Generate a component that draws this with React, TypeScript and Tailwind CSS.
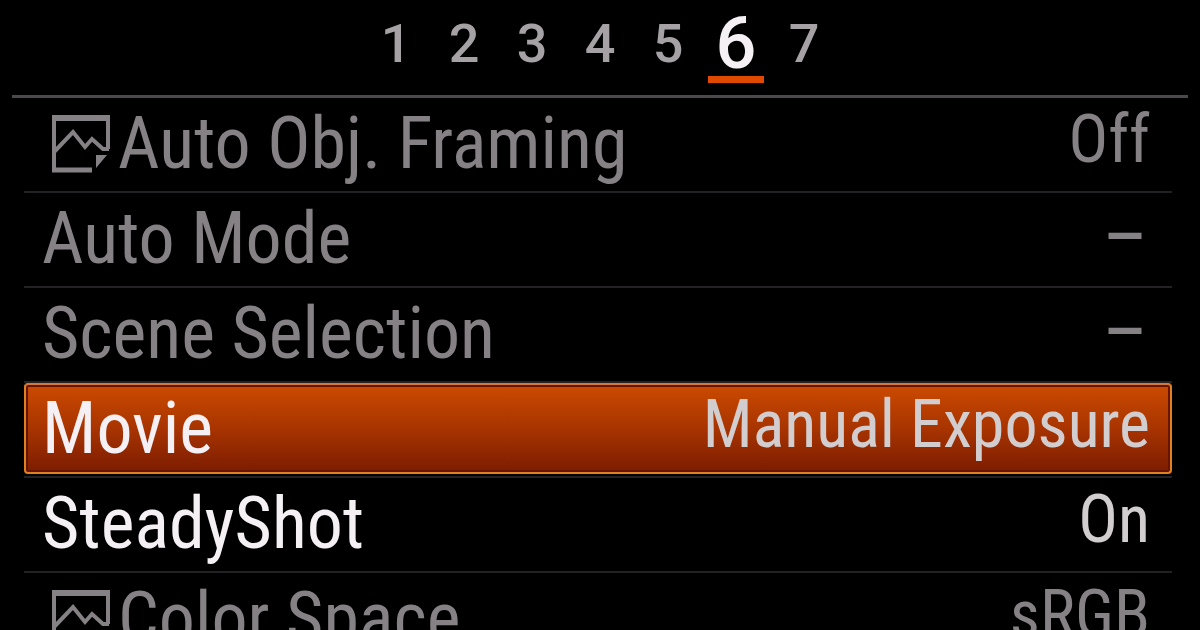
import { useState } from 'react';
import clsx from 'clsx';

type MenuItem = {
  label: string;
  value: string;
  still?: boolean;
  disabled?: boolean;
};

const PAGES = [1, 2, 3, 4, 5, 6, 7];

const ITEMS: MenuItem[] = [
  { label: 'Auto Obj. Framing', value: 'Off', still: true, disabled: true },
  { label: 'Auto Mode', value: '–', disabled: true },
  { label: 'Scene Selection', value: '–', disabled: true },
  { label: 'Movie', value: 'Manual Exposure' },
  { label: 'SteadyShot', value: 'On' },
  { label: 'Color Space', value: 'sRGB', still: true, disabled: true },
];

// still image marker: framed mountains with a folded corner
const StillIcon = () => (
  <svg
    viewBox="0 0 60 60"
    className="mr-2 ml-2 h-15 w-15 shrink-0"
    fill="none"
    stroke="currentColor"
    strokeWidth="4"
    aria-hidden="true"
  >
    <path d="M4 57V2M58 2V35" />
    <path d="M2 4H60" strokeWidth="6" />
    <path d="M2 56H42" strokeWidth="5" />
    <path d="M4 38L23 18L35 33L42 25L53 35H59" />
    <path d="M46 41H57L46 54Z" fill="currentColor" stroke="none" />
  </svg>
);

const App = () => {
  const [page, setPage] = useState(6);
  const [selected, setSelected] = useState('Movie');

  return (
    <main className="h-screen overflow-hidden bg-black font-['Roboto_Condensed','Liberation_Sans',sans-serif]">
      <nav className="mx-3 flex h-[98px] justify-center gap-3 border-b-3 border-[#4b494b] font-['Roboto',sans-serif]">
        {PAGES.map((n) => (
          <button
            key={n}
            type="button"
            onClick={() => setPage(n)}
            className={clsx(
              'flex h-[83px] w-14 items-center justify-center font-medium',
              n === page
                ? 'border-b-7 border-[#e04a00] pt-3 text-[72px] leading-[72px] text-[#f4f0f4]'
                : 'pt-1 text-[54px] leading-[54px] text-[#a5a1a4]',
            )}
          >
            {n}
          </button>
        ))}
      </nav>

      <ul className="mr-7 ml-6">
        {ITEMS.map((item) => {
          const active = item.label === selected;
          return (
            <li key={item.label} className="h-[95px] border-b-2 border-[#232123] pb-0.5">
              <button
                type="button"
                disabled={item.disabled}
                onClick={() => setSelected(item.label)}
                className={clsx(
                  'flex h-full w-full items-center justify-between rounded-sm border-2 pr-5 pl-4 whitespace-nowrap',
                  active
                    ? 'border-[#e08020] border-t-[#d87838] bg-linear-to-b from-[#cc4a00] via-[#a83400] to-[#7c1c00] shadow-[inset_0_0_0_2px_#641400]'
                    : 'border-transparent',
                  item.disabled ? 'text-[#858184]' : 'text-[#f4f0f4]',
                )}
              >
                <span className="flex items-center text-[72px] leading-[88px]">
                  {item.still && <StillIcon />}
                  {item.label}
                </span>
                <span
                  className={clsx(
                    'text-[66px] leading-[80px]',
                    item.value === '–'
                      ? "pr-1 pb-1 font-['Roboto',sans-serif] font-medium"
                      : 'pb-2',
                    !item.disabled && 'text-[#d2ced0]',
                  )}
                >
                  {item.value}
                </span>
              </button>
            </li>
          );
        })}
      </ul>
    </main>
  );
};

export default App;
